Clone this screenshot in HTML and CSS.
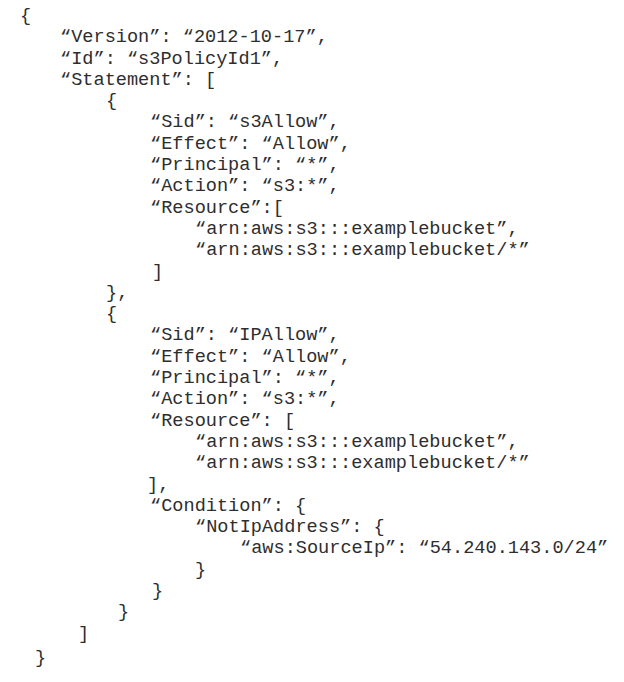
FILE: index.html
```html
<!DOCTYPE html>
<html>
<head>
<meta charset="utf-8">
<link rel="stylesheet" href="styles.css">
</head>
<body>
<div class="code">
  <div class="ln i0">{</div>
  <div class="ln i1">“Version”: “2012-10-17”,</div>
  <div class="ln i1">“Id”: “s3PolicyId1”,</div>
  <div class="ln i1">“Statement”: [</div>
  <div class="ln i2">{</div>
  <div class="ln i3">“Sid”: “s3Allow”,</div>
  <div class="ln i3">“Effect”: “Allow”,</div>
  <div class="ln i3">“Principal”: “*”,</div>
  <div class="ln i3">“Action”: “s3:*”,</div>
  <div class="ln i3">“Resource”:[</div>
  <div class="ln i4">“arn:aws:s3:::examplebucket”,</div>
  <div class="ln i4">“arn:aws:s3:::examplebucket/*”</div>
  <div class="ln i3b">]</div>
  <div class="ln i2">},</div>
  <div class="ln i2">{</div>
  <div class="ln i3">“Sid”: “IPAllow”,</div>
  <div class="ln i3">“Effect”: “Allow”,</div>
  <div class="ln i3">“Principal”: “*”,</div>
  <div class="ln i3">“Action”: “s3:*”,</div>
  <div class="ln i3">“Resource”: [</div>
  <div class="ln i4">“arn:aws:s3:::examplebucket”,</div>
  <div class="ln i4">“arn:aws:s3:::examplebucket/*”</div>
  <div class="ln i3a">],</div>
  <div class="ln i3">“Condition”: {</div>
  <div class="ln i4">“NotIpAddress”: {</div>
  <div class="ln i5">“aws:SourceIp”: “54.240.143.0/24”</div>
  <div class="ln i4">}</div>
  <div class="ln i3b">}</div>
  <div class="ln c29">}</div>
  <div class="ln c30">]</div>
  <div class="ln c31 last">}</div>
</div>
</body>
</html>
```

FILE: styles.css
```css
html, body {
  margin: 0;
  padding: 0;
  background: #ffffff;
}

.code {
  padding-top: 6px;
  font-family: "Courier New", "Nimbus Mono PS", "Nimbus Mono L", FreeMono, "Liberation Mono", monospace;
  font-size: 18.6px;
  line-height: 21.3px;
  color: #2e2e2e;
}

.ln {
  height: 21.3px;
  white-space: pre;
}

.i0 { padding-left: 20px; }
.i1 { padding-left: 60px; }
.i2 { padding-left: 106px; }
.i3 { padding-left: 150px; }
.i3a { padding-left: 147px; }
.i3b { padding-left: 152px; }
.i4 { padding-left: 195px; }
.i5 { padding-left: 240px; }
.c29 { padding-left: 118px; }
.c30 { padding-left: 78px; }
.c31 { padding-left: 35px; }
.last { margin-top: 3px; }
```
